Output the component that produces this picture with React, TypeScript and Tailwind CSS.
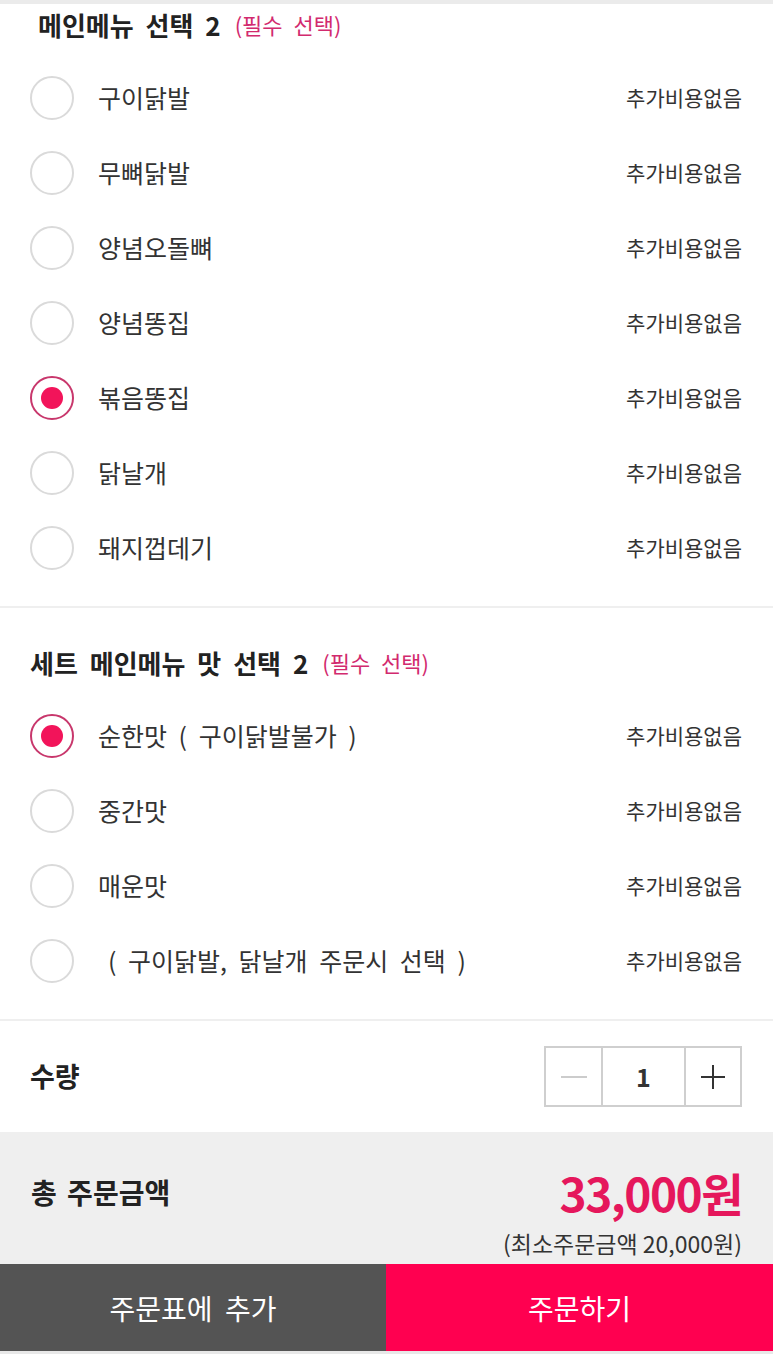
import React from 'react';

type Option = { label: string; selected?: boolean };

const mainMenu: Option[] = [
  { label: '구이닭발' },
  { label: '무뼈닭발' },
  { label: '양념오돌뼈' },
  { label: '양념똥집' },
  { label: '볶음똥집', selected: true },
  { label: '닭날개' },
  { label: '돼지껍데기' },
];

const flavors: Option[] = [
  { label: '순한맛 ( 구이닭발불가 )', selected: true },
  { label: '중간맛' },
  { label: '매운맛' },
  { label: '( 구이닭발, 닭날개 주문시 선택 )' },
];

function Radio({ selected }: { selected?: boolean }) {
  if (selected) {
    return (
      <span className="flex h-[44px] w-[44px] shrink-0 items-center justify-center rounded-full border-2 border-[#c8376c]">
        <span className="h-[22px] w-[22px] rounded-full bg-[#f2145a]" />
      </span>
    );
  }
  return <span className="h-[44px] w-[44px] shrink-0 rounded-full border-2 border-[#dadada]" />;
}

function OptionRow({ option }: { option: Option }) {
  // labels that open with a bracket sit a little further in
  const indent = option.label.startsWith('(') ? 'ml-[34px]' : 'ml-[24px]';
  return (
    <div className="flex h-[75px] items-center pr-[31px] pl-[30px]">
      <Radio selected={option.selected} />
      <span className={`${indent} flex-1 text-[25px] text-[#333] [word-spacing:6px]`}>
        {option.label}
      </span>
      <span className="text-[21px] text-[#333]">추가비용없음</span>
    </div>
  );
}

function Section({
  title,
  options,
  titleIndent,
}: {
  title: string;
  options: Option[];
  titleIndent: string;
}) {
  return (
    <section className="pb-[21px]">
      <h2
        className={`flex h-[40px] items-center text-[26px] font-bold text-[#222] [word-spacing:6px] ${titleIndent}`}
      >
        {title}
        <span className="ml-[14px] text-[22px] font-normal text-[#d22a6e] [word-spacing:6px]">
          (필수 선택)
        </span>
      </h2>
      <div className="mt-[16px]">
        {options.map((o) => (
          <OptionRow key={o.label} option={o} />
        ))}
      </div>
    </section>
  );
}

export default function App() {
  return (
    <div
      className="w-[773px] min-h-[1357px] bg-white"
      style={{ fontFamily: '"Noto Sans CJK KR", "Noto Sans", sans-serif' }}
    >
      <div className="border-t-[4px] border-[#ebebeb]">
        <Section title="메인메뉴 선택 2" options={mainMenu} titleIndent="pl-[38px]" />
      </div>
      <div className="h-[2px] bg-[#efefef]" />
      <div className="pt-[34px]">
        <Section title="세트 메인메뉴 맛 선택 2" options={flavors} titleIndent="pl-[30px]" />
      </div>
      <div className="h-[2px] bg-[#efefef]" />

      <div className="flex h-[111px] items-center justify-between pr-[31px] pl-[30px]">
        <span className="text-[27px] font-bold text-[#222]">수량</span>
        <div className="flex h-[61px] border-2 border-[#cfcfcf]">
          <button className="flex w-[57px] items-center justify-center border-r-2 border-[#cfcfcf]">
            <span className="h-[2px] w-[26px] bg-[#cccccc]" />
          </button>
          <div className="flex w-[81px] items-center justify-center text-[25px] font-bold text-[#333]">
            1
          </div>
          <button className="relative flex w-[56px] items-center justify-center border-l-2 border-[#cfcfcf]">
            <span className="absolute h-[2px] w-[24px] bg-[#333]" />
            <span className="absolute h-[24px] w-[2px] bg-[#333]" />
          </button>
        </div>
      </div>

      <div className="bg-[#efefef] px-[31px] pt-[35px] pb-[7px]">
        <div className="flex h-[50px] items-center justify-between">
          <span className="text-[28px] font-bold text-[#222] [word-spacing:4px]">총 주문금액</span>
          <span className="text-[46px] font-bold tracking-[-1.5px] text-[#e5175c]">33,000원</span>
        </div>
        <div className="mt-[12px] text-right text-[23px] leading-[28px] text-[#333]">
          (최소주문금액 20,000원)
        </div>
      </div>

      <div className="flex h-[90px] border-b-[3px] border-[#e8e8e8]">
        <button className="flex w-[386px] items-center justify-center bg-[#545454] text-[28px] text-white [word-spacing:6px]">
          주문표에 추가
        </button>
        <button className="flex flex-1 items-center justify-center bg-[#ff0050] text-[28px] text-white">
          주문하기
        </button>
      </div>
    </div>
  );
}
